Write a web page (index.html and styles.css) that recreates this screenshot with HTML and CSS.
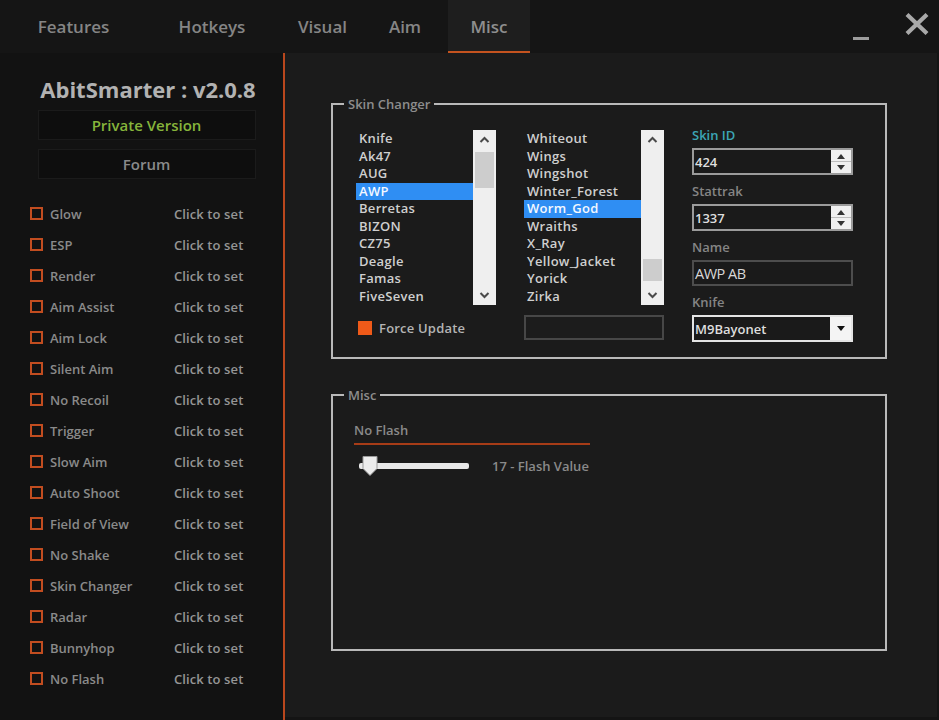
FILE: index.html
```html
<!DOCTYPE html>
<html lang="en">
<head>
<meta charset="utf-8">
<title>AbitSmarter</title>
<link rel="stylesheet" href="styles.css">
</head>
<body>
<div class="app">
  <header class="topbar">
    <nav class="tabs">
      <div class="tab tab-features">Features</div>
      <div class="tab tab-hotkeys">Hotkeys</div>
      <div class="tab tab-visual">Visual</div>
      <div class="tab tab-aim">Aim</div>
      <div class="tab tab-misc active">Misc</div>
    </nav>
    <div class="winctl">
      <span class="minimize"></span>
      <svg class="close" width="24" height="22" viewBox="0 0 24 22"><path d="M2 1.5 L22 20.5 M22 1.5 L2 20.5" stroke="#a9a9a9" stroke-width="4.2" fill="none"/></svg>
    </div>
  </header>
  <div class="content">
    <aside class="sidebar">
      <h1 class="title">AbitSmarter : v2.0.8</h1>
      <div class="sbtn sbtn-private">Private Version</div>
      <div class="sbtn">Forum</div>
      <ul class="features">
        <li class="feature"><span class="check"></span><span class="fname">Glow</span><span class="bind">Click to set</span></li>
        <li class="feature"><span class="check"></span><span class="fname">ESP</span><span class="bind">Click to set</span></li>
        <li class="feature"><span class="check"></span><span class="fname">Render</span><span class="bind">Click to set</span></li>
        <li class="feature"><span class="check"></span><span class="fname">Aim Assist</span><span class="bind">Click to set</span></li>
        <li class="feature"><span class="check"></span><span class="fname">Aim Lock</span><span class="bind">Click to set</span></li>
        <li class="feature"><span class="check"></span><span class="fname">Silent Aim</span><span class="bind">Click to set</span></li>
        <li class="feature"><span class="check"></span><span class="fname">No Recoil</span><span class="bind">Click to set</span></li>
        <li class="feature"><span class="check"></span><span class="fname">Trigger</span><span class="bind">Click to set</span></li>
        <li class="feature"><span class="check"></span><span class="fname">Slow Aim</span><span class="bind">Click to set</span></li>
        <li class="feature"><span class="check"></span><span class="fname">Auto Shoot</span><span class="bind">Click to set</span></li>
        <li class="feature"><span class="check"></span><span class="fname">Field of View</span><span class="bind">Click to set</span></li>
        <li class="feature"><span class="check"></span><span class="fname">No Shake</span><span class="bind">Click to set</span></li>
        <li class="feature"><span class="check"></span><span class="fname">Skin Changer</span><span class="bind">Click to set</span></li>
        <li class="feature"><span class="check"></span><span class="fname">Radar</span><span class="bind">Click to set</span></li>
        <li class="feature"><span class="check"></span><span class="fname">Bunnyhop</span><span class="bind">Click to set</span></li>
        <li class="feature"><span class="check"></span><span class="fname">No Flash</span><span class="bind">Click to set</span></li>
      </ul>
    </aside>
    <main class="main">
      <fieldset class="group group-skin">
        <legend>Skin Changer</legend>
        <div class="group-body skin-row">
          <div class="col col-list">
            <div class="listbox">
              <ul class="items">
                <li>Knife</li><li>Ak47</li><li>AUG</li><li class="sel">AWP</li><li>Berretas</li>
                <li>BIZON</li><li>CZ75</li><li>Deagle</li><li>Famas</li><li>FiveSeven</li>
              </ul>
              <div class="vscroll">
                <svg class="arrow" width="23" height="20" viewBox="0 0 23 20"><path d="M7.5 12 L11.5 8 L15.5 12" stroke="#4a4a4a" stroke-width="2" fill="none"/></svg>
                <div class="track"><div class="thumb" style="margin-top:2px;height:36px"></div></div>
                <svg class="arrow" width="23" height="20" viewBox="0 0 23 20"><path d="M7.5 8 L11.5 12 L15.5 8" stroke="#4a4a4a" stroke-width="2" fill="none"/></svg>
              </div>
            </div>
            <div class="force"><span class="fbox"></span><span>Force Update</span></div>
          </div>
          <div class="col col-list">
            <div class="listbox">
              <ul class="items">
                <li>Whiteout</li><li>Wings</li><li>Wingshot</li><li>Winter_Forest</li><li class="sel">Worm_God</li>
                <li>Wraiths</li><li>X_Ray</li><li>Yellow_Jacket</li><li>Yorick</li><li>Zirka</li>
              </ul>
              <div class="vscroll">
                <svg class="arrow" width="23" height="20" viewBox="0 0 23 20"><path d="M7.5 12 L11.5 8 L15.5 12" stroke="#4a4a4a" stroke-width="2" fill="none"/></svg>
                <div class="track"><div class="thumb" style="margin-top:109px;height:22px"></div></div>
                <svg class="arrow" width="23" height="20" viewBox="0 0 23 20"><path d="M7.5 8 L11.5 12 L15.5 8" stroke="#4a4a4a" stroke-width="2" fill="none"/></svg>
              </div>
            </div>
            <div class="textbox"></div>
          </div>
          <div class="col col-fields">
            <div class="flabel flabel-accent">Skin ID</div>
            <div class="field field-num"><span class="fval">424</span>
              <div class="spin"><span class="spin-btn"><svg width="8" height="5" viewBox="0 0 8 5"><path d="M0 5 L4 0 L8 5 Z" fill="#333"/></svg></span><span class="spin-btn"><svg width="8" height="5" viewBox="0 0 8 5"><path d="M0 0 L4 5 L8 0 Z" fill="#333"/></svg></span></div>
            </div>
            <div class="flabel">Stattrak</div>
            <div class="field field-num"><span class="fval">1337</span>
              <div class="spin"><span class="spin-btn"><svg width="8" height="5" viewBox="0 0 8 5"><path d="M0 5 L4 0 L8 5 Z" fill="#333"/></svg></span><span class="spin-btn"><svg width="8" height="5" viewBox="0 0 8 5"><path d="M0 0 L4 5 L8 0 Z" fill="#333"/></svg></span></div>
            </div>
            <div class="flabel">Name</div>
            <div class="field field-text"><span class="fval fval-big">AWP AB</span></div>
            <div class="flabel">Knife</div>
            <div class="field field-combo"><span class="fval">M9Bayonet</span>
              <span class="drop"><svg width="8" height="5" viewBox="0 0 8 5"><path d="M0 0 L4 5 L8 0 Z" fill="#111"/></svg></span>
            </div>
          </div>
        </div>
      </fieldset>
      <fieldset class="group group-misc">
        <legend>Misc</legend>
        <div class="group-body misc-body">
          <div class="nf-label">No Flash</div>
          <div class="slider-row">
            <div class="slider">
              <div class="strack"></div>
              <svg class="sthumb" width="16" height="20" viewBox="0 0 16 20"><path d="M1 0.5 H15 V12.5 L8 19.5 L1 12.5 Z" fill="#ececec" stroke="#9a9a9a" stroke-width="1"/></svg>
            </div>
            <span class="svalue">17 - Flash Value</span>
          </div>
        </div>
      </fieldset>
    </main>
  </div>
</div>
</body>
</html>
```
FILE: styles.css
```css
* { box-sizing: border-box; }
html, body { margin: 0; padding: 0; }
body {
  width: 939px;
  height: 720px;
  overflow: hidden;
  background: #1b1b1b;
  font-family: "Open Sans", "Noto Sans", sans-serif;
  color: #8c8c8c;
}
.app { display: flex; flex-direction: column; height: 720px; }

/* top bar */
.topbar {
  height: 53px;
  background: #151515;
  display: flex;
  justify-content: space-between;
  flex: none;
}
.tabs { display: flex; }
.tab {
  height: 53px;
  line-height: 54px;
  text-align: center;
  font-size: 17px;
  font-weight: 600;
  color: #858585;
}
.tab-features { width: 147px; }
.tab-hotkeys { width: 130px; }
.tab-visual { width: 91px; }
.tab-aim { width: 74px; margin-right: 6px; }
.tab-misc { width: 82px; }
.tab.active { background: #1e1e1e; border-bottom: 2px solid #c4531f; line-height: 54px; color: #8e8e8e; }
.winctl { display: flex; align-items: flex-start; padding-right: 10px; }
.minimize { width: 16px; height: 3px; background: #9c9c9c; margin-top: 37px; margin-right: 36px; }
.close { margin-top: 13px; }

/* body */
.content { flex: 1; display: flex; min-height: 0; }
.sidebar {
  width: 285px;
  flex: none;
  background: #121212;
  border-right: 2px solid #b9471d;
  padding: 23px 0 0 10px;
  display: flex;
  flex-direction: column;
  align-items: center;
}
.title {
  margin: 0 0 8px 3px;
  font-size: 22px;
  line-height: 26px;
  font-weight: 700;
  color: #b2b2b2;
}
.sbtn {
  width: 218px;
  height: 30px;
  margin-bottom: 9px;
  background: #0e0e0e;
  border: 1px solid #1b1b1b;
  text-align: center;
  line-height: 28px;
  font-size: 15px;
  font-weight: 600;
  color: #8a8a8a;
}
.sbtn-private { color: #86b43b; }
.features {
  list-style: none;
  margin: 10px 0 0 -10px;
  padding: 0 0 0 30px;
  align-self: stretch;
}
.feature {
  display: flex;
  align-items: center;
  height: 31px;
  font-size: 13px;
  font-weight: 600;
}
.check {
  width: 13px;
  height: 13px;
  border: 2px solid #c24d20;
  margin-right: 7px;
  flex: none;
}
.fname { width: 124px; color: #8a8a8a; }
.bind { color: #959595; letter-spacing: 0.1px; }

/* main */
.main {
  flex: 1;
  padding: 43px 0 0 46px;
  border-right: 2px solid #141414;
  border-bottom: 3px solid #141414;
}
.group {
  margin: 0;
  width: 556px;
  border: 2px solid #b9b9b9;
  padding: 0;
}
.group legend {
  margin-left: 11px;
  padding: 0 4px;
  font-size: 13px;
  line-height: 16px;
  font-weight: 600;
  color: #8d8d8d;
}
.group-skin { height: 263px; }
.group-misc { height: 264px; margin-top: 28px; }
.skin-row { display: flex; gap: 28px; padding: 15px 0 0 23px; }
.misc-body { padding: 19px 0 0 21px; }

.col-list { width: 140px; margin-top: 3px; }
.listbox { display: flex; height: 175px; }
.items {
  list-style: none;
  margin: 0;
  padding: 0;
  width: 117px;
}
.items li {
  height: 17.5px;
  line-height: 17.5px;
  padding-left: 3px;
  font-size: 13px;
  font-weight: 600;
  color: #cfcfcf;
  letter-spacing: 0.3px;
}
.items li.sel { background: #2f8ef3; color: #f4f8ff; }
.vscroll {
  width: 23px;
  background: #efefef;
  display: flex;
  flex-direction: column;
}
.arrow { flex: none; display: block; }
.track { flex: 1; padding: 0 2px; }
.thumb { background: #cdcdcd; }

.force {
  display: flex;
  align-items: center;
  height: 25px;
  margin-top: 10px;
  padding-left: 2px;
  font-size: 13px;
  font-weight: 600;
  color: #b4b4b4;
  letter-spacing: 0.2px;
}
.fbox { width: 14px; height: 14px; background: #ef5a19; margin-right: 7px; }
.textbox {
  height: 25px;
  margin-top: 10px;
  border: 2px solid #474747;
  background: #1c1c1c;
}

.col-fields { width: 161px; }
.flabel {
  height: 16px;
  line-height: 16px;
  font-size: 13px;
  font-weight: 600;
  color: #858585;
  margin-top: 8px;
  margin-bottom: 5px;
}
.flabel:first-child { margin-top: 0; }
.flabel-accent { color: #3ba6b6; }
.field {
  display: flex;
  align-items: center;
  background: #1a1a1a;
  border: 2px solid #9b9b9b;
}
.field-num { height: 27px; }
.field-text { height: 26px; border-color: #4d4d4d; }
.field-combo { height: 27px; border-color: #e4e4e4; }
.fval {
  flex: 1;
  padding-left: 1px;
  font-size: 13px;
  font-weight: 600;
  color: #dedede;
}
.fval-big { font-size: 14.5px; font-weight: 400; color: #d8d8d8; letter-spacing: -0.5px; }
.spin {
  width: 20px;
  align-self: stretch;
  background: #f0f0f0;
  display: flex;
  flex-direction: column;
  padding: 1px 0;
}
.spin-btn {
  flex: 1;
  display: flex;
  align-items: center;
  justify-content: center;
}
.spin-btn + .spin-btn { border-top: 1px solid #bdbdbd; }
.drop {
  width: 21px;
  align-self: stretch;
  background: #f4f4f4;
  display: flex;
  align-items: center;
  justify-content: center;
}

/* misc */
.nf-label {
  width: 236px;
  font-size: 13px;
  line-height: 16px;
  font-weight: 600;
  color: #8a8a8a;
  padding-bottom: 5px;
  border-bottom: 2px solid #a73c17;
}
.slider-row {
  display: flex;
  align-items: center;
  height: 20px;
  margin-top: 11px;
}
.slider { position: relative; width: 110px; height: 20px; margin-left: 5px; }
.strack {
  margin-top: 7px;
  height: 6px;
  background: #e8e8e8;
  border-radius: 2px;
}
.sthumb { position: absolute; left: 3px; top: 0; }
.svalue {
  margin-left: 23px;
  font-size: 13px;
  font-weight: 600;
  color: #8a8a8a;
}
```
